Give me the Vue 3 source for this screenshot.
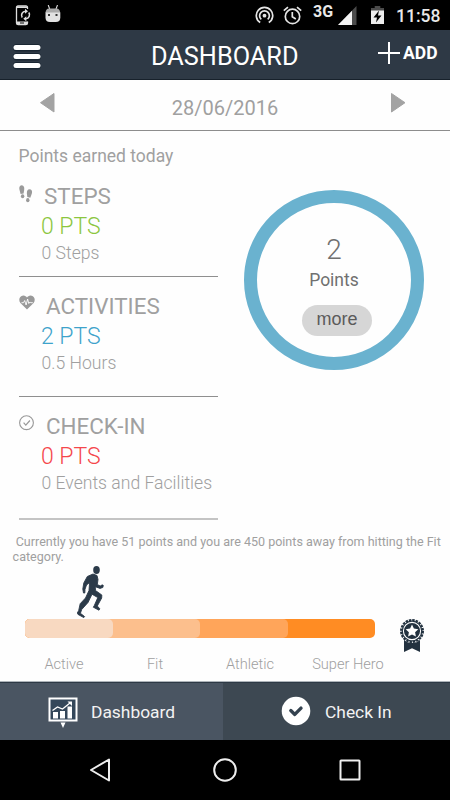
<script setup>
const stats = [
  { key: 'steps', title: 'STEPS', points: '0 PTS', detail: '0 Steps' },
  { key: 'activities', title: 'ACTIVITIES', points: '2 PTS', detail: '0.5 Hours' },
  { key: 'checkin', title: 'CHECK-IN', points: '0 PTS', detail: '0 Events and Facilities' },
]
const levels = ['Active', 'Fit', 'Athletic', 'Super Hero']
</script>

<template>
  <div class="phone">
    <div class="status">
      <svg class="status-sync" width="17" height="21" viewBox="0 0 17 21" fill="none">
        <path d="M12.500 4V2.500Q12.500 1 11 1H3Q1.500 1 1.500 2.500V18Q1.500 19.500 3 19.500H11Q12.500 19.500 12.500 18V16.500" stroke="#ddd" stroke-width="1.300" />
        <path d="M1.500 1.500H12.500V3H1.500zM1.500 16.500H12.500V19.500H1.500z" fill="#ddd" />
        <path d="M5 18h4" stroke="#111" />
        <path d="M7.200 12.500A4 4 0 0 1 10.500 6.300M13.800 7.500A4 4 0 0 1 10.800 13.800" stroke="#ddd" stroke-width="1.600" />
        <path d="M10 3.800l3 2.500-3 2.500zM11.300 11.300l-3 2.500 3 2.500z" fill="#ddd" />
      </svg>
      <svg class="status-bot" width="16" height="18" viewBox="0 0 16 18">
        <path d="M3.200 0l1.500 4M12.500 0L11 4" stroke="#ddd" stroke-width="1.100" />
        <path d="M.5 8Q.8 3.500 4 3.500h7.500Q15 3.500 15.200 8z" fill="#aaa" />
        <path d="M.5 7.500h14.800v5q0 4.500-4.500 4.500H5Q.5 17 .5 12.500z" fill="#e2e2e2" />
        <path d="M3 9h2v2H3zM10.500 9h2v2h-2z" fill="#333" />
      </svg>
      <span class="grow"></span>
      <svg class="status-cast" width="19" height="19" viewBox="0 0 19 19" fill="none" stroke="#e5e5e5" stroke-width="1.700">
        <path d="M5.200 16.500A8.200 8.200 0 1 1 13.800 16.500" />
        <path d="M6.300 13.400A4.900 4.900 0 1 1 12.700 13.400" />
        <circle cx="9.500" cy="9.700" r="1.900" fill="#e5e5e5" stroke="none" />
      </svg>
      <svg class="status-alarm" width="19" height="19" viewBox="0 0 19 19" fill="none" stroke="#e5e5e5" stroke-width="1.700">
        <circle cx="9.500" cy="10.400" r="7.200" />
        <path d="M9.300 6v4.800l3.500 2.200M.8 4.600l4.200-3.500M18.200 4.600L14 1.100" />
      </svg>
      <span class="network">3G</span>
      <svg class="status-signal" width="19" height="20" viewBox="0 0 19 20">
        <path d="M0 19L18.500 0V19z" fill="#4b4b4b" />
        <path d="M0 19L14 4.700V19z" fill="#f3f3f3" />
      </svg>
      <svg class="status-battery" width="13" height="18" viewBox="0 0 13 18">
        <path d="M3.700 0h5.600v2H13v4H0V2h3.700z" fill="#4b4b4b" />
        <path d="M0 4.500h13V18H0z" fill="#eee" />
        <path d="M8 4.500L2.500 11.500H6L5 16.500l5.500-7H7z" fill="#000" />
      </svg>
      <span class="clock">11:58</span>
    </div>

    <header class="header">
      <svg class="menu" width="28" height="26" viewBox="0 0 28 26">
        <g fill="#1a2733">
          <rect width="28" height="7.500" rx="3.700" />
          <rect y="9" width="28" height="7.500" rx="3.700" />
          <rect y="18" width="28" height="7.500" rx="3.700" />
        </g>
        <g fill="#fff">
          <rect x=".5" y="1" width="27" height="5" rx="2.500" />
          <rect x=".5" y="10" width="27" height="5" rx="2.500" />
          <rect x=".5" y="19" width="27" height="5" rx="2.500" />
        </g>
      </svg>
      <h1 class="title">DASHBOARD</h1>
      <div class="add">
        <svg width="22" height="22" viewBox="0 0 22 22"><path d="M11 0v22M0 11h22" stroke="#fff" stroke-width="2" /></svg>
        <span>ADD</span>
      </div>
    </header>

    <div class="datebar">
      <svg width="16" height="22" viewBox="0 0 16 22"><path d="M15 1.500v18.500L1.500 10.700z" fill="#a3a3a3" stroke="#a3a3a3" stroke-linejoin="round" /></svg>
      <span class="date">28/06/2016</span>
      <svg width="16" height="22" viewBox="0 0 16 22"><path d="M1.500 1.500v18.500l13.500-9.300z" fill="#a3a3a3" stroke="#a3a3a3" stroke-linejoin="round" /></svg>
    </div>

    <main class="main">
      <p class="earned">Points earned today</p>
      <div class="columns">
        <div class="stats">
          <section v-for="s in stats" :key="s.key" class="stat" :class="s.key">
            <div class="stat-head">
              <svg v-if="s.key === 'steps'" class="stat-icon" width="14" height="19" viewBox="0 0 14 19" fill="#9a9a9a">
                <path d="M.3 4C0 1.700 1.200.3 2.800.3 4.900.3 5.500 2.500 5.200 4.800L4.600 8.500 1.600 9z" />
                <ellipse cx="3.600" cy="11.300" rx="1.700" ry="2" />
                <path d="M13 8C13.400 5.800 12.300 4.200 10.600 4.200 8.400 4.200 7.700 6.200 7.900 8.300L8.300 12l3 .7z" />
                <ellipse cx="8.800" cy="15.200" rx="1.700" ry="2.100" />
              </svg>
              <svg v-else-if="s.key === 'activities'" class="stat-icon" width="16" height="15" viewBox="0 0 16 15">
                <path d="M8 14.500L1.400 8C-.8 5.300.3.500 4.300.4 6.200.4 7.300 1.400 8 2.600 8.700 1.400 9.800.4 11.700.4 15.700.5 16.800 5.300 14.600 8z" fill="#999" />
                <path d="M2.500 7.700h2L5.700 5.500l1.400 4.500L8.600 4l1.200 4.500L11 7l.8.700h2" fill="none" stroke="#fff" stroke-width=".9" />
              </svg>
              <svg v-else class="stat-icon" width="16" height="16" viewBox="0 0 16 16" fill="none" stroke="#999">
                <circle cx="7.500" cy="7.700" r="6.900" stroke-width="1.100" />
                <path d="M4.600 7.700l2.200 2.500 4.100-4.700" stroke-width="1.200" />
              </svg>
              <h2 class="stat-title">{{ s.title }}</h2>
            </div>
            <div class="stat-points">{{ s.points }}</div>
            <div class="stat-detail">{{ s.detail }}</div>
          </section>
        </div>
        <div class="ring">
          <span class="ring-value">2</span>
          <span class="ring-label">Points</span>
          <button class="more">more</button>
        </div>
      </div>

      <p class="message">&nbsp;Currently you have 51 points and you are 450 points away from hitting the Fit<br />category.</p>

      <div class="progress">
        <div class="track">
          <svg class="runner" width="27" height="52" viewBox="0 0 27 52" fill="#2b3a49">
            <ellipse cx="19.500" cy="4" rx="3.300" ry="3.900" />
            <path d="M16 8L20 9.500 21 13.500 20.300 18.500 23.200 20 25.500 18.800 26.300 19.600 25.800 21.500 23 22.400 18.300 20.700 18.500 24.500 24.800 29 24.700 32 20.300 40 22.800 42.800 22 44.200 16.300 41.200 17.200 39.800 20.800 31.600 15 28.200 11 36.500 4.700 43.500 3.400 47.300 7.600 50.600 6.800 51.600 1 48.400.2 47.200 1.700 44.500 3.200 37.700 8.500 32 12 24.500 12.600 16.500 9.500 19 8 23.300 7.800 27 6.500 27 5.800 23 6.800 17 10.300 10.500z" stroke="#2b3a49" stroke-width=".9" stroke-linejoin="round" />
          </svg>
          <div class="seg seg4"><div class="seg seg3"><div class="seg seg2"><div class="seg seg1"></div></div></div></div>
        </div>
        <svg class="badge" width="26" height="34" viewBox="0 0 26 34">
          <path d="M5 20.500h16V33l-8-3.700L5 33z" fill="#22313f" />
          <circle cx="13" cy="12" r="12" fill="#fff" />
          <circle cx="13" cy="12" r="11" fill="none" stroke="#22313f" stroke-width="2" stroke-dasharray="2.500 .95" />
          <circle cx="13" cy="12" r="10.400" fill="#22313f" />
          <circle cx="13" cy="12" r="8.600" fill="none" stroke="#fff" stroke-width="1.100" />
          <path d="M13 5.600l1.900 4 4.400.6-3.200 3 .8 4.400-3.900-2.100-3.900 2.100.8-4.400-3.200-3 4.400-.6z" fill="#fff" />
        </svg>
      </div>
      <div class="levels">
        <span v-for="l in levels" :key="l" class="level">{{ l }}</span>
      </div>
    </main>

    <nav class="tabs">
      <div class="tab active">
        <svg width="30" height="32" viewBox="0 0 30 32">
          <rect x="1.500" y="2.500" width="27" height="22" fill="#34475a" stroke="#fff" stroke-width="2" />
          <path d="M5 16h5v6.500H5zM12 15h5v7.500h-5zM19.500 10.500H24v12h-4.500z" fill="#fff" />
          <path d="M4.500 14.500l5-3.500 5 2L22 7" fill="none" stroke="#fff" stroke-width="1.300" />
          <path d="M19.500 5.500H24V10zM12.500 26.500h5L15 32z" fill="#fff" />
        </svg>
        <span class="tab-text">Dashboard</span>
      </div>
      <div class="tab">
        <svg class="check" width="30" height="30" viewBox="0 0 30 30">
          <circle cx="15" cy="15" r="14.300" fill="#fff" />
          <path d="M9.800 14.600l4 3.800 6.200-6.300" fill="none" stroke="#34424f" stroke-width="3.400" stroke-linecap="round" stroke-linejoin="round" />
        </svg>
        <span class="tab-text">Check In</span>
      </div>
    </nav>

    <div class="softkeys">
      <svg width="24" height="26" viewBox="0 0 24 26"><path d="M21 2.500v21L3 13z" fill="none" stroke="#eee" stroke-width="2" stroke-linejoin="round" /></svg>
      <svg width="26" height="26" viewBox="0 0 26 26"><circle cx="13" cy="13" r="10.800" fill="none" stroke="#eee" stroke-width="2" /></svg>
      <svg width="24" height="26" viewBox="0 0 24 26"><rect x="2.500" y="3.500" width="19" height="19" rx=".5" fill="none" stroke="#eee" stroke-width="2" /></svg>
    </div>
  </div>
</template>

<style>
body { margin: 0; background: #fff; }
</style>

<style scoped>
* { box-sizing: border-box; }
.phone { width: 450px; height: 800px; display: flex; flex-direction: column; background: #fefefe; font-family: Roboto, sans-serif; color: #a0a0a0; overflow: hidden; white-space: nowrap; }
.phone svg { display: block; flex: none; }
h1, h2, p { margin: 0; font-weight: 400; }

.status { height: 30px; flex: none; display: flex; align-items: flex-start; background: #000; color: #e8e8e8; padding: 0 11px 0 15px; }
.grow { flex: 1; }
.status-sync { margin-top: 5px; }
.status-bot { margin: 5px 0 0 13px; }
.status-cast { margin: 6px 9px 0 0; }
.status-alarm { margin: 6px 11px 0 0; }
.network { width: 21px; font-size: 16px; font-weight: 700; line-height: 23px; margin-right: 4px; }
.status-signal { margin: 6px 14px 0 0; }
.status-battery { margin: 6px 12px 0 0; }
.clock { width: 43px; font-size: 17.500px; font-weight: 500; line-height: 32px; }

.header { height: 50px; flex: none; display: flex; align-items: center; background: #2e3945; border-bottom: 1px solid #17212b; padding: 0 12px 0 13px; color: #fff; }
.menu { margin-top: 4px; }
.title { margin-left: 110px; width: 152px; font-size: 25.300px; line-height: 50px; margin-top: 5px; }
.add { display: flex; align-items: center; margin-left: 75px; gap: 3px; margin-top: -3px; font-weight: 700; font-size: 17.500px; }

.datebar { height: 51px; flex: none; display: flex; justify-content: space-between; border-bottom: 1px solid #8d8d8d; padding: 12px 44px 0 39px; }
.date { font-size: 20px; line-height: 30px; padding: 1px 0 0 5px; }

.main { height: 551px; flex: none; border-bottom: 1px solid #aeb4ba; }
.earned { font-size: 17.500px; line-height: 26px; margin: 12px 0 0 18.500px; }
.columns { display: flex; margin: 12px 0 0 19px; }
.stats { width: 199px; }
.stat { height: 96px; border-bottom: 1px solid #8f8f8f; }
.activities { height: 106px; margin-top: 14px; }
.checkin { height: 109px; margin-top: 14px; border-bottom: 2px solid #c4c4c4; }
.stat-head { display: flex; height: 31px; }
.stat-icon { margin-top: 4px; }
.stat-title { font-size: 22.400px; line-height: 30px; margin: 0 0 0 11px; }
.stat-points { font-size: 23px; font-weight: 300; line-height: 30px; margin-left: 22px; }
.stat-detail { font-size: 17.600px; font-weight: 300; line-height: 24px; margin: -1px 0 0 22.500px; }
.steps .stat-points { color: #8cc63f; }
.activities .stat-points { color: #3ea3cb; }
.checkin .stat-points { color: #f5474b; }

.ring { width: 180px; height: 180px; margin: 9px 0 0 26px; border: 13px solid #6ab2cf; border-radius: 50%; display: flex; flex-direction: column; align-items: center; color: #707070; }
.ring-value { font-size: 28px; font-weight: 300; line-height: 32px; margin-top: 31px; }
.ring-label { font-size: 17.500px; line-height: 26px; margin-top: 1px; }
.more { width: 70px; height: 31px; margin: 12px 0 0 6px; padding: 0 0 2px; border: 0; border-radius: 16px; background: #d6d6d6; color: #5b5b5b; font: 18px "Liberation Sans", sans-serif; }

.message { font-size: 12.540px; line-height: 15px; margin: 14px 0 0 12.600px; }
.progress { display: flex; margin-left: 25px; padding-top: 55px; height: 90px; }
.track { width: 350px; height: 19px; position: relative; }
.runner { position: absolute; left: 52px; top: -53px; }
.seg { height: 19px; border-radius: 5px; }
.seg4 { width: 350px; background: #ff8c23; }
.seg3 { width: 263px; background: #ffa55a; }
.seg2 { width: 175px; background: #fcbf8d; }
.seg1 { width: 88px; background: #f8d9c1; }
.badge { margin-left: 24px; }
.levels { display: grid; grid-template-columns: 78px 104px 86px 110px; margin: 0 0 0 25px; height: 20px; font-size: 14.600px; font-weight: 300; line-height: 20px; text-align: center; }

.tabs { height: 58px; flex: none; display: flex; background: #3d4852; color: #f3f3f3; border-top: 1px solid #2d3945; }
.tab { display: flex; align-items: center; flex: 1; padding-left: 58px; gap: 14px; }
.tab.active { flex: none; width: 223px; background: #4a5562; padding-left: 48px; gap: 13px; }
.check { margin-bottom: 1px; }
.tab-text { font-size: 17.400px; }
.softkeys { flex: 1; display: flex; align-items: center; justify-content: space-between; background: #000; padding: 0 88px; }
</style>
